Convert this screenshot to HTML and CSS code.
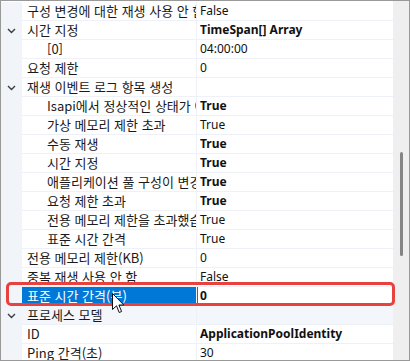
FILE: index.html
```html
<!DOCTYPE html>
<html lang="ko">
<head>
    <meta charset="UTF-8">
    <title>속성</title>
    <link rel="stylesheet" href="styles.css">
</head>
<body>
    <div class="grid">
        <div class="rows">
            <div class="row"><div class="gutter"></div><div class="name">구성 변경에 대한 재생 사용 안 함</div><div class="value">False</div></div>
            <div class="row"><div class="gutter"><svg class="chevron" width="9" height="6" viewBox="0 0 9 6"><polyline points="1,1 4.5,4.5 8,1"/></svg></div><div class="name">시간 지정</div><div class="value bold">TimeSpan[] Array</div></div>
            <div class="row"><div class="gutter"></div><div class="name sub">[0]</div><div class="value">04:00:00</div></div>
            <div class="row"><div class="gutter"></div><div class="name">요청 제한</div><div class="value">0</div></div>
            <div class="row"><div class="gutter"><svg class="chevron" width="9" height="6" viewBox="0 0 9 6"><polyline points="1,1 4.5,4.5 8,1"/></svg></div><div class="name">재생 이벤트 로그 항목 생성</div><div class="value"></div></div>
            <div class="row"><div class="gutter"></div><div class="name sub">Isapi에서 정상적인 상태가 아님</div><div class="value bold">True</div></div>
            <div class="row"><div class="gutter"></div><div class="name sub">가상 메모리 제한 초과</div><div class="value">True</div></div>
            <div class="row"><div class="gutter"></div><div class="name sub">수동 재생</div><div class="value bold">True</div></div>
            <div class="row"><div class="gutter"></div><div class="name sub">시간 지정</div><div class="value bold">True</div></div>
            <div class="row"><div class="gutter"></div><div class="name sub">애플리케이션 풀 구성이 변경됨</div><div class="value bold">True</div></div>
            <div class="row"><div class="gutter"></div><div class="name sub">요청 제한 초과</div><div class="value bold">True</div></div>
            <div class="row"><div class="gutter"></div><div class="name sub">전용 메모리 제한을 초과했습니다</div><div class="value">True</div></div>
            <div class="row"><div class="gutter"></div><div class="name sub">표준 시간 간격</div><div class="value">True</div></div>
            <div class="row"><div class="gutter"></div><div class="name">전용 메모리 제한(KB)</div><div class="value">0</div></div>
            <div class="row"><div class="gutter"></div><div class="name">중복 재생 사용 안 함</div><div class="value">False</div></div>
            <div class="row selected"><div class="gutter"></div><div class="name">표준 시간 간격(분)</div><div class="value bold">0</div></div>
            <div class="row category"><div class="gutter"><svg class="chevron" width="9" height="6" viewBox="0 0 9 6"><polyline points="1,1 4.5,4.5 8,1"/></svg></div><div class="name">프로세스 모델</div><div class="value"></div></div>
            <div class="row"><div class="gutter"></div><div class="name">ID</div><div class="value bold">ApplicationPoolIdentity</div></div>
            <div class="row"><div class="gutter"></div><div class="name">Ping 간격(초)</div><div class="value">30</div></div>
        </div>
        <div class="scrollbar"><div class="thumb"></div></div>

        <!-- callout drawn over the selected row -->
        <div class="highlight"></div>
        <svg class="cursor" width="13" height="21" viewBox="0 0 13 21">
            <path d="M0.5,0.5 L0.5,16.5 L4.5,12.8 L7.2,19.5 L9.6,18.5 L6.9,12 L11.8,12 Z"/>
        </svg>
    </div>
</body>
</html>
```

FILE: styles.css
```css
body {
    margin: 0;
    font-family: "Segoe UI", "Noto Sans", "Noto Sans CJK KR", sans-serif;
    font-size: 12px;
    color: #111;
}

.grid {
    position: relative;
    width: 410px;
    height: 361px;
    box-sizing: border-box;
    border: 1px solid #999;
    display: flex;
    overflow: hidden;
    background-color: #fff;
}

.rows {
    width: 392px;
    padding-top: 1px;
}

.row {
    display: grid;
    grid-template-columns: 21px 175px 196px;
    height: 19px;
}

.gutter {
    background-color: #f1f4f9;
    display: flex;
    align-items: center;
    justify-content: center;
}

.chevron {
    fill: none;
    stroke: #3c3c3c;
    stroke-width: 1.4;
}

.name,
.value {
    box-sizing: border-box;
    border-bottom: 1px solid #eef1f7;
    line-height: 18px;
    white-space: nowrap;
    overflow: hidden;
}

.name {
    padding-left: 5px;
    border-right: 1px solid #eef1f7;
    font-family: "Noto Sans CJK KR", sans-serif;
    font-size: 13px;
    color: #1a1a1a;
}

.name.sub {
    padding-left: 25px;
}

.value {
    padding-left: 3px;
}

.bold {
    font-weight: bold;
}

.selected .name {
    background-color: #0078d7;
    color: #fff;
}

.selected .value {
    box-shadow: inset 1px 0 0 #0078d7;
}

.category .name,
.category .value {
    background-color: #f3f6fb;
}

.scrollbar {
    width: 16px;
    background-color: #efefef;
    display: flex;
    justify-content: center;
}

.thumb {
    width: 3px;
    height: 104px;
    margin-top: 151px;
    margin-left: 1px;
    border-radius: 2px;
    background-color: #858585;
}

.highlight {
    position: absolute;
    left: 5px;
    top: 281px;
    width: 383px;
    height: 18px;
    border: 3px solid #e8413e;
    border-radius: 5px;
}

.cursor {
    position: absolute;
    left: 111px;
    top: 292px;
    fill: #fff;
    stroke: #111;
    stroke-width: 1;
}
```
